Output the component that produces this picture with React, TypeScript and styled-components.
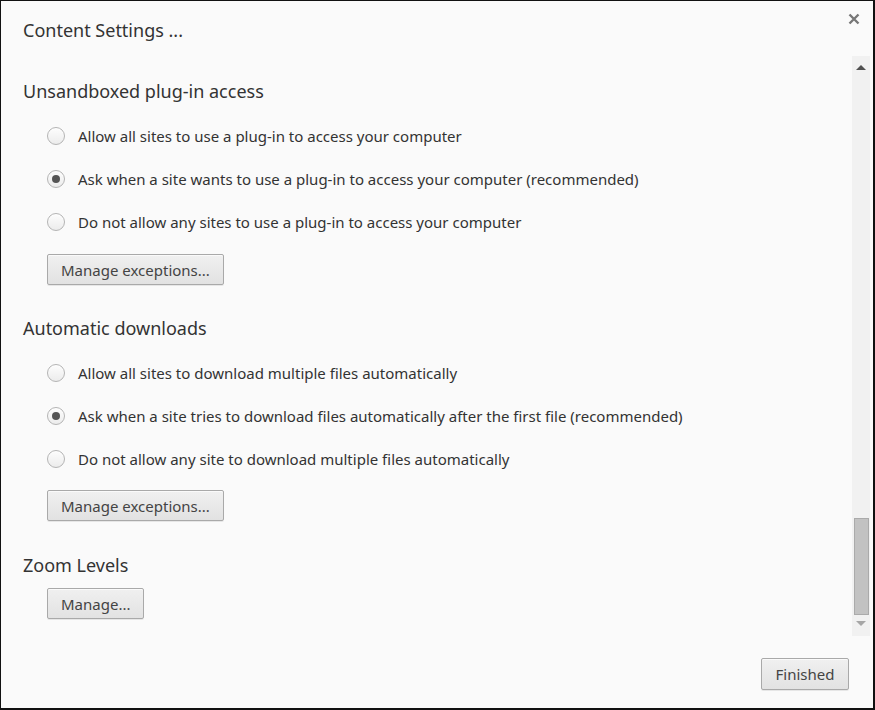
import React from "react";
import styled, { createGlobalStyle } from "styled-components";

const Global = createGlobalStyle`
  html, body { margin: 0; padding: 0; background: #fafafa; }
  * { box-sizing: border-box; }
`;

const Dialog = styled.div`
  width: 875px;
  height: 710px;
  background: #fafafa;
  border-top: 1px solid #111;
  border-left: 1px solid #111;
  border-right: 2px solid #111;
  border-bottom: 2px solid #111;
  display: flex;
  flex-direction: column;
  font-family: "Noto Sans", "Open Sans", sans-serif;
  color: #333;
  position: relative;
`;

const Header = styled.div`
  height: 55px;
  flex: none;
  display: flex;
  align-items: flex-start;
  padding: 16px 0 0 22px;
`;

const Title = styled.h1`
  margin: 0;
  font-size: 18px;
  font-weight: 400;
  line-height: 26px;
  color: #333;
`;

const Close = styled.button`
  position: absolute;
  top: 11px;
  right: 12px;
  width: 14px;
  height: 14px;
  padding: 0;
  border: none;
  background: none;
  display: flex;
`;

const Body = styled.div`
  flex: 1;
  display: flex;
  min-height: 0;
`;

const Content = styled.div`
  flex: 1;
  padding: 24px 0 0 22px;
  display: flex;
  flex-direction: column;
  align-items: flex-start;
`;

const Heading = styled.h2<{ $gap?: number }>`
  margin: ${(p) => p.$gap ?? 0}px 0 0 0;
  font-size: 18px;
  font-weight: 400;
  line-height: 22px;
  color: #333;
`;

const Options = styled.div`
  margin-top: 12px;
  display: flex;
  flex-direction: column;
`;

const Option = styled.label`
  height: 43px;
  display: flex;
  align-items: center;
  gap: 13px;
  padding-left: 24px;
  font-size: 15px;
  color: #333;
`;

const Radio = styled.span<{ $checked?: boolean }>`
  width: 18px;
  height: 18px;
  border-radius: 50%;
  border: 1px solid #b4b4b4;
  background: linear-gradient(#fdfdfd, #ececec);
  box-shadow: inset 0 1px 1px rgba(255, 255, 255, 0.8);
  display: flex;
  align-items: center;
  justify-content: center;
  flex: none;
  &::after {
    content: "";
    width: 8px;
    height: 8px;
    border-radius: 50%;
    background: #555;
    display: ${(p) => (p.$checked ? "block" : "none")};
  }
`;

const Button = styled.button<{ $gap?: number }>`
  margin: ${(p) => p.$gap ?? 0}px 0 0 24px;
  height: 31px;
  padding: 0 13px;
  border: 1px solid #a9a9a9;
  border-radius: 2px;
  background: linear-gradient(#f0f0f0, #e2e2e2);
  box-shadow: 0 1px 0 rgba(0, 0, 0, 0.08), inset 0 1px 0 #fafafa;
  font-family: "Noto Sans", "Open Sans", sans-serif;
  font-size: 15px;
  color: #444;
`;

const ScrollTrack = styled.div`
  width: 18px;
  flex: none;
  margin-right: 3px;
  background: #f1f1f1;
  display: flex;
  flex-direction: column;
  align-items: center;
`;

const Arrow = styled.div<{ $down?: boolean; $color: string }>`
  width: 0;
  height: 0;
  border-left: 5px solid transparent;
  border-right: 5px solid transparent;
  ${(p) =>
    p.$down
      ? `border-top: 5px solid ${p.$color};`
      : `border-bottom: 5px solid ${p.$color};`}
  margin: ${(p) => (p.$down ? "0 0 10px 0" : "9px 0 0 0")};
`;

const TrackSpace = styled.div`
  flex: 1;
  width: 100%;
  display: flex;
  flex-direction: column;
  justify-content: flex-end;
  align-items: center;
  padding-bottom: 6px;
`;

const Thumb = styled.div`
  width: 15px;
  height: 97px;
  background: #c2c2c2;
  border: 1px solid #aaaaaa;
`;

const Footer = styled.div`
  height: 72px;
  flex: none;
  display: flex;
  justify-content: flex-end;
  align-items: flex-start;
  padding: 22px 24px 0 0;
`;

const FinishButton = styled(Button)`
  margin: 0;
  height: 32px;
  width: 88px;
  padding: 0;
  font-size: 15px;
`;

const sections = [
  {
    title: "Unsandboxed plug-in access",
    options: [
      "Allow all sites to use a plug-in to access your computer",
      "Ask when a site wants to use a plug-in to access your computer (recommended)",
      "Do not allow any sites to use a plug-in to access your computer",
    ],
    checked: 1,
    gap: 0,
    btnGap: 11,
  },
  {
    title: "Automatic downloads",
    options: [
      "Allow all sites to download multiple files automatically",
      "Ask when a site tries to download files automatically after the first file (recommended)",
      "Do not allow any site to download multiple files automatically",
    ],
    checked: 1,
    gap: 32,
    btnGap: 10,
  },
];

export default function App() {
  return (
    <>
      <Global />
      <Dialog>
        <Header>
          <Title>Content Settings ...</Title>
        </Header>
        <Close aria-label="Close">
          <svg width="14" height="14" viewBox="0 0 14 14">
            <path d="M2.5 2.5 L11.5 11.5 M11.5 2.5 L2.5 11.5" stroke="#777" strokeWidth="2.4" />
          </svg>
        </Close>
        <Body>
          <Content>
            {sections.map((s) => (
              <React.Fragment key={s.title}>
                <Heading $gap={s.gap}>{s.title}</Heading>
                <Options>
                  {s.options.map((o, i) => (
                    <Option key={o}>
                      <Radio $checked={i === s.checked} />
                      {o}
                    </Option>
                  ))}
                </Options>
                <Button $gap={s.btnGap}>Manage exceptions...</Button>
              </React.Fragment>
            ))}
            <Heading $gap={33}>Zoom Levels</Heading>
            <Button $gap={12}>Manage...</Button>
          </Content>
          <ScrollTrack>
            <Arrow $color="#505050" />
            <TrackSpace>
              <Thumb />
            </TrackSpace>
            <Arrow $down $color="#a6a6a6" />
          </ScrollTrack>
        </Body>
        <Footer>
          <FinishButton>Finished</FinishButton>
        </Footer>
      </Dialog>
    </>
  );
}
